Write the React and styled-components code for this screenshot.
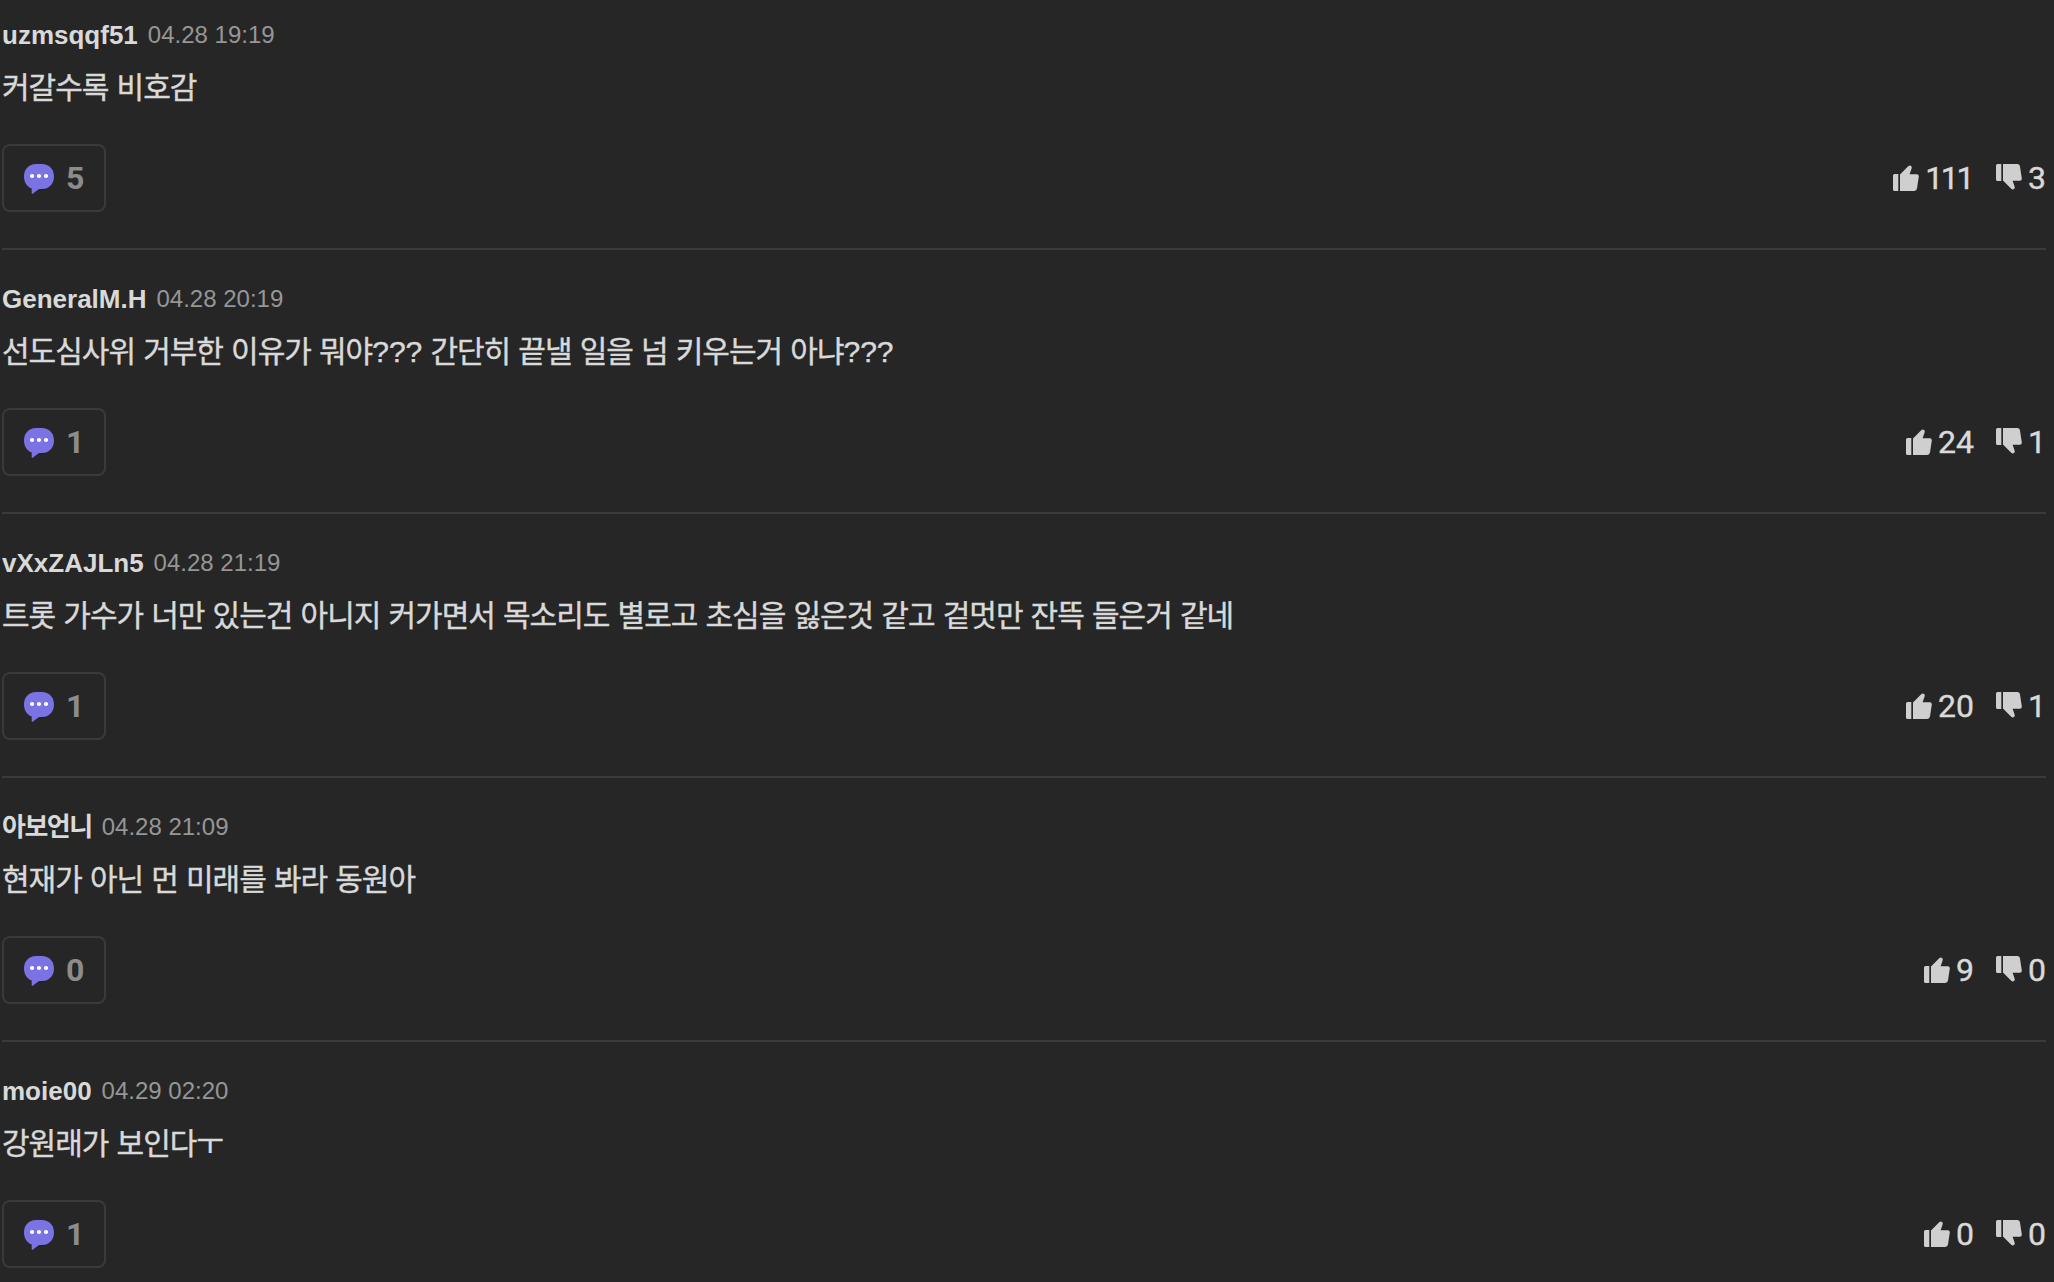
import React from 'react';
import styled, { createGlobalStyle } from 'styled-components';

const GlobalStyle = createGlobalStyle`
  * {
    box-sizing: border-box;
  }

  body {
    margin: 0;
    background: #262626;
    overflow: hidden;
    font-family: 'Liberation Sans', 'Noto Sans CJK KR', sans-serif;
  }
`;

const CommentList = styled.ul`
  width: 2044px;
  height: 1282px;
  margin: 0 0 0 2px;
  padding: 0;
  list-style: none;
  overflow: hidden;
`;

const CommentItem = styled.li`
  height: 264px;
  margin-top: -14px;
  padding-top: 28px;
  border-bottom: 2px solid #3a3a3a;

  & + & {
    margin-top: 0;
  }
`;

const CommentHead = styled.div`
  display: flex;
  align-items: flex-start;
  height: 40px;
  line-height: 42px;
  white-space: nowrap;
`;

const Nickname = styled.strong`
  font-size: 26px;
  font-weight: 700;
  letter-spacing: ${({ $spacing }) => $spacing || 0}px;
  color: #d9d9d9;
`;

const WriteDate = styled.span`
  margin-left: 10px;
  font-size: 24px;
  color: #969696;
`;

const CommentText = styled.p`
  height: 42px;
  margin: 13px 0 0;
  font-size: 30px;
  line-height: 42px;
  letter-spacing: -1px;
  word-spacing: 0.8px;
  white-space: nowrap;
  color: #d9d9d9;
  -webkit-text-stroke: 0.4px #d9d9d9;
`;

const Marks = styled.span`
  letter-spacing: 0;
`;

const CommentFoot = styled.div`
  display: flex;
  justify-content: space-between;
  align-items: center;
  height: 68px;
  margin-top: 35px;
`;

const ReplyButton = styled.button`
  display: flex;
  align-items: center;
  width: 104px;
  height: 68px;
  padding: 0 0 0 20px;
  border: 2px solid #3a3a3a;
  border-radius: 8px;
  background: none;
  font-family: Roboto, sans-serif;
  font-size: 32px;
  font-weight: 700;
  color: #8c8c8c;

  svg {
    margin: 2px 12px 0 0;
  }
`;

const Votes = styled.div`
  display: flex;
  gap: 22px;
`;

const VoteButton = styled.button`
  display: flex;
  align-items: center;
  gap: 6px;
  padding: 0;
  border: 0;
  background: none;
  font-family: Roboto, sans-serif;
  font-size: 32px;
  color: #d9d9d9;

  svg {
    margin-bottom: ${({ $raised }) => ($raised ? 2 : 0)}px;
  }
`;

// a run of ones is set closer together
const VoteCount = styled.span`
  margin-right: ${({ $ones }) => ($ones ? 2 : 0)}px;
  letter-spacing: ${({ $ones }) => ($ones ? -2.4 : 0)}px;
  -webkit-text-stroke: 0.4px #d9d9d9;
`;

const BubbleIcon = () => (
  <svg width="30" height="30" viewBox="0 0 30 30">
    <path
      d="M12 0h6c7 0 12 5 12 12.400s-5 12.600-12 12.600h-3l-6.400 4.700c-.5.500-.9.200-.9-.6v-4.600C3.200 22.800 0 18.400 0 12.400 0 5 5 0 12 0z"
      fill="#7b73e3"
    />
    <circle cx="8" cy="12" r="2.100" fill="#fff" />
    <circle cx="15" cy="12" r="2.100" fill="#fff" />
    <circle cx="22" cy="12" r="2.100" fill="#fff" />
  </svg>
);

const LikeIcon = () => (
  <svg width="26" height="26" viewBox="0 0 26 26">
    <path
      d="M1.600 9H5.300V26H1.600Q0 26 0 24.400V10.600Q0 9 1.600 9zM7 9.500 15.200 1.200Q17 -.4 18.300 1.200Q19 2 18.600 3.400L16.600 9.300H23.800Q26 9.300 25.800 11.500L24 23.600Q23.600 26 21.200 26H7z"
      fill="#cfcfcf"
    />
  </svg>
);

const DislikeIcon = () => (
  <svg width="26" height="26" viewBox="0 0 26 26">
    <path
      d="M1.600 17H5.300V0H1.600Q0 0 0 1.600V15.400Q0 17 1.600 17zM7 16.500 15.200 24.800Q17 26.400 18.300 24.800Q19 24 18.600 22.600L16.600 16.700H23.800Q26 16.700 25.800 14.500L24 2.400Q23.600 0 21.200 0H7z"
      fill="#cfcfcf"
    />
  </svg>
);

const comments = [
  { name: 'uzmsqqf51', date: '04.28 19:19', text: '커갈수록 비호감', replies: 5, likes: 111, dislikes: 3 },
  {
    name: 'GeneralM.H',
    date: '04.28 20:19',
    text: '선도심사위 거부한 이유가 뭐야??? 간단히 끝낼 일을 넘 키우는거 아냐???',
    replies: 1,
    likes: 24,
    dislikes: 1
  },
  {
    name: 'vXxZAJLn5',
    date: '04.28 21:19',
    text: '트롯 가수가 너만 있는건 아니지 커가면서 목소리도 별로고 초심을 잃은것 같고 겉멋만 잔뜩 들은거 같네',
    replies: 1,
    likes: 20,
    dislikes: 1
  },
  { name: '아보언니', spacing: -1.5, date: '04.28 21:09', text: '현재가 아닌 먼 미래를 봐라 동원아', replies: 0, likes: 9, dislikes: 0 },
  { name: 'moie00', date: '04.29 02:20', text: '강원래가 보인다ㅜ', replies: 1, likes: 0, dislikes: 0 }
];

// question marks keep their normal advance, only the hangul is tightened
const renderText = text =>
  text.split(/(\?+)/).map((part, i) => (part[0] === '?' ? <Marks key={i}>{part}</Marks> : part));

function Comment({ name, spacing, date, text, replies, likes, dislikes }) {
  return (
    <CommentItem>
      <CommentHead>
        <Nickname $spacing={spacing}>{name}</Nickname>
        <WriteDate>{date}</WriteDate>
      </CommentHead>
      <CommentText>{renderText(text)}</CommentText>
      <CommentFoot>
        <ReplyButton>
          <BubbleIcon />
          {replies}
        </ReplyButton>
        <Votes>
          <VoteButton>
            <LikeIcon />
            <VoteCount $ones={/^11+$/.test(likes)}>{likes}</VoteCount>
          </VoteButton>
          <VoteButton $raised>
            <DislikeIcon />
            <VoteCount>{dislikes}</VoteCount>
          </VoteButton>
        </Votes>
      </CommentFoot>
    </CommentItem>
  );
}

function App() {
  return (
    <>
      <GlobalStyle />
      <CommentList>
        {comments.map(comment => (
          <Comment key={comment.name} {...comment} />
        ))}
      </CommentList>
    </>
  );
}

export default App;
